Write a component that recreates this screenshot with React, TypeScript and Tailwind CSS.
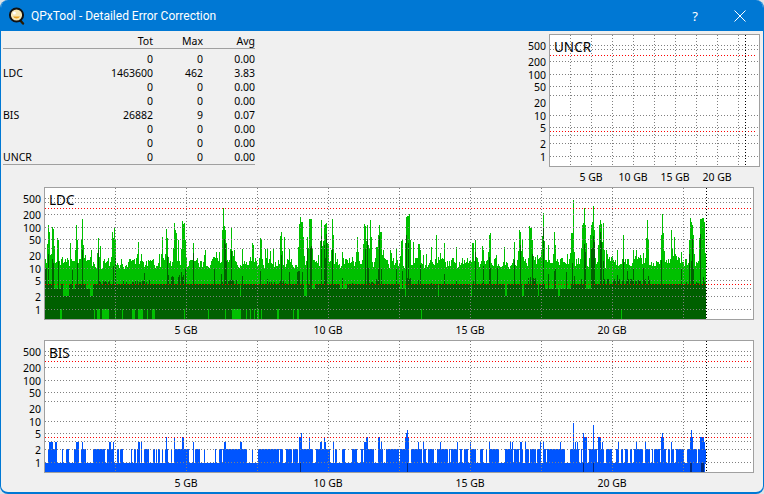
import React from "react";

const FONT = "[font-family:'Noto_Sans','Liberation_Sans',sans-serif]";
const YLABELS: [string, number][] = [["500", 12], ["200", 28], ["100", 41], ["50", 53], ["20", 69], ["10", 82], ["5", 94], ["2", 110], ["1", 123]];
const GRID = [11, 15, 27, 40, 52, 61, 81, 93, 101, 109, 122];
const RED = [21, 97];

function rng(seed: number) {
  let s = seed;
  return () => {
    s = (s * 1664525 + 1013904223) >>> 0;
    return s / 4294967296;
  };
}

function hDots(y: number, w: number) {
  let d = "";
  for (let x = 0; x < w; x += 3) d += `M${x} ${y + 0.5}h1`;
  return d;
}
function vDots(x: number, h: number) {
  let d = "";
  for (let y = 0; y < h; y += 3) d += `M${x + 0.5} ${y}v1`;
  return d;
}

/* page x, page y of the top of the tallest LDC spikes */
const LDC_PEAKS: [number, number][] = [
  [48, 225], [49, 232], [52, 227], [53, 229], [57, 238], [58, 240], [70, 243], [76, 225], [77, 240], [82, 219], [83, 245], [91, 250],
  [98, 238], [100, 246], [112, 232], [113, 238], [114, 227], [115, 240], [138, 242], [162, 237], [166, 229], [167, 238], [174, 223], [175, 230], [176, 233], [178, 240], [182, 221], [183, 224], [184, 223], [185, 240], [193, 243], [205, 250],
  [223, 208], [224, 226], [225, 230], [226, 243], [231, 227], [242, 249], [252, 243], [253, 245], [260, 238], [261, 240], [267, 249], [273, 248], [280, 236], [281, 232], [284, 237], [289, 249],
  [299, 224], [300, 217], [301, 222], [302, 222], [307, 237], [309, 219], [310, 219], [311, 219], [321, 220], [324, 225], [325, 224], [326, 223], [327, 243], [328, 244], [332, 219], [342, 252], [352, 257], [357, 237], [364, 224], [365, 226], [367, 225], [368, 245], [370, 220],
  [376, 247], [377, 247], [378, 235], [379, 225], [380, 232], [381, 232], [396, 249], [401, 241], [402, 240], [406, 217], [407, 216], [408, 216], [409, 214], [410, 240], [413, 242], [418, 244], [419, 244], [420, 250], [431, 247], [436, 235], [438, 257], [444, 243], [456, 247], [472, 243], [473, 243], [475, 240], [482, 246], [483, 250], [489, 235], [490, 233], [504, 247], [514, 242], [519, 230], [520, 232], [522, 239], [529, 226], [530, 228], [531, 228], [532, 240], [537, 255],
  [541, 250], [543, 213], [548, 245], [554, 232], [555, 245], [571, 233], [572, 233], [573, 200], [574, 252], [582, 225], [583, 223], [584, 208], [585, 225], [590, 235], [591, 225], [592, 222], [593, 206], [594, 230], [599, 225], [600, 220], [601, 224], [603, 223], [606, 250], [617, 250], [623, 235], [633, 250], [643, 253], [647, 220], [648, 240], [661, 235], [662, 214], [663, 233], [671, 230], [674, 237], [689, 240], [690, 218], [691, 222], [692, 225], [693, 235], [700, 219], [701, 219], [702, 218], [703, 218], [704, 222],
];

const STRIP: [number, number][] = [
  [60, 62], [94, 95], [97, 100], [102, 109], [115, 116], [122, 123], [132, 135], [138, 143], [147, 148], [152, 155], [184, 185], [208, 209], [225, 226], [232, 241], [246, 247], [250, 251], [254, 255], [257, 259], [261, 262], [277, 279], [293, 294], [297, 299], [421, 422], [621, 622],
];
const DIPS: [number, number, number][] = [
  [53, 57, 289], [58, 60, 289], [63, 68, 296], [72, 74, 289], [86, 89, 289], [90, 92, 296], [304, 306, 296], [312, 314, 289], [340, 346, 289], [400, 404, 289], [482, 483, 296], [522, 523, 296], [505, 506, 296], [545, 570, 289], [558, 559, 296], [585, 592, 289],
];
const BUMPS: [number, number, number][] = [
  [97, 112, 280], [120, 150, 281], [168, 184, 275], [222, 236, 280], [266, 285, 281], [296, 302, 270], [366, 378, 282], [376, 381, 266], [404, 410, 277], [528, 536, 277], [600, 650, 279], [686, 704, 282],
];

function buildLdc() {
  const r = rng(77);
  const light: string[] = [];
  const dark: string[] = [];
  const strip: string[] = [];
  const pk = new Map(LDC_PEAKS);
  const lift = new Map<number, number>();
  for (const [x, y] of LDC_PEAKS) {
    for (const o of [-1, 1]) {
      const v = y + 14 + Math.round(r() * 18);
      const k = x + o;
      if (!lift.has(k) || lift.get(k)! > v) lift.set(k, v);
    }
  }
  let base = 262;
  for (let px = 45; px <= 705; px++) {
    const x = px - 45 + 0.5;
    base = 0.35 * base + 0.65 * (255 + r() * 15);
    let top = Math.round(base);
    if (r() < 0.05) top = 249 + Math.round(r() * 7);
    const l = lift.get(px);
    if (l !== undefined && l < top) top = l;
    const p = pk.get(px);
    if (p !== undefined) top = p;
    light.push(`M${x} ${top - 188}V132`);
    let d = 284;
    for (const [a, b, y] of BUMPS) if (px >= a && px <= b && r() < 0.4) d = y + Math.round(r() * 2);
    for (const [a, b, y] of DIPS) if (px >= a && px <= b) d = y;
    if (d === 284 && r() < 0.012) d = 296;
    if (p !== undefined && r() < 0.55) d = Math.min(283, p + 10 + Math.round(r() * 30));
    else if (r() < 0.02) d = 268 + Math.round(r() * 12);
    if (px <= 46) d = 268;
    dark.push(`M${x} ${d - 188}V132`);
    if (STRIP.some(([a, b]) => px >= a && px < b)) strip.push(`M${x} 121V132`);
  }
  return { light: light.join(""), dark: dark.join(""), strip: strip.join("") };
}

const BIS_GAPS: [number, number][] = [
  [45, 47], [57, 62], [69, 74], [89, 93], [115, 116], [119, 120], [125, 131], [136, 137], [149, 153], [160, 162], [172, 175], [191, 194], [202, 204], [206, 215], [216, 219], [249, 252], [253, 255], [283, 286], [292, 293], [298, 299], [313, 315], [330, 333], [337, 340], [345, 351], [357, 361], [476, 480], [483, 486], [500, 505], [512, 514], [523, 525], [565, 570], [587, 589], [604, 606], [628, 630], [650, 652], [660, 662], [674, 676], [684, 685],
];
const BIS3 = [49, 50, 51, 52, 55, 56, 76, 77, 78, 82, 109, 110, 113, 138, 139, 141, 193, 224, 225, 240, 241, 309, 320, 321, 325, 333, 364, 365, 381, 418, 423, 440, 457, 470, 489, 510, 512, 520, 521, 525, 540, 543, 560, 575, 577, 602, 618, 636, 645, 671, 692, 704];
const BIS4: number[] = [166, 174, 182, 183, 299, 300, 301, 309, 324, 366, 367, 378, 379, 405, 406, 408, 584, 585, 586, 598, 599, 600, 661, 663, 690, 692, 700, 701, 702, 703];
const BIS_HI: [number, number][] = [[301, 433], [406, 433], [407, 430], [573, 423], [593, 425], [583, 433], [662, 433], [691, 430]];
const BIS_DARK: [number, number][] = [[300, 301], [407, 408], [583, 584], [593, 594], [690, 692], [701, 704]];

function buildBis() {
  const r = rng(2024);
  const blue: string[] = [];
  const dark: string[] = [];
  const hi = new Map(BIS_HI);
  const top3 = new Set(BIS3);
  const top4 = new Set(BIS4);
  let gap = 0;
  for (let px = 45; px <= 705; px++) {
    const x = px - 45 + 0.5;
    let top = 449;
    if (gap > 0) {
      gap--;
      top = 0;
    } else if (r() < 0.13) {
      gap = Math.floor(r() * 3);
      top = 0;
    }
    if (BIS_GAPS.some(([a, b]) => px >= a && px < b)) top = 0;
    if (top3.has(px)) top = 442;
    if (top4.has(px)) top = 437;
    const h = hi.get(px);
    if (h !== undefined) top = h;
    if (top) blue.push(`M${x} ${top - 341}V123`);
    if (BIS_DARK.some(([a, b]) => px >= a && px < b)) dark.push(`M${x} 122V132`);
  }
  return { blue: blue.join(""), dark: dark.join("") };
}

const LDC = buildLdc();
const BIS = buildBis();

function Plot({ width, step, steps, end, title, children }: { width: number; step: number; steps: number; end: number; title: string; children?: React.ReactNode }) {
  const inner = width - 2;
  const v = Array.from({ length: steps }, (_, i) => (i + 1) * step);
  return (
    <div className="relative h-[133px] border border-[#a0a0a0] bg-white" style={{ width }}>
      <svg width={inner} height={131} className="block" shapeRendering="crispEdges">
        {children}
        <path stroke="#808080" fill="none" d={GRID.map((y) => hDots(y - 1, inner)).join("") + v.map((x) => vDots(x - 1, 131)).join("")} />
        <path stroke="#ff0000" fill="none" d={RED.map((y) => hDots(y - 1, inner - 2)).join("")} />
        <path stroke="#000000" fill="none" d={vDots(end - 1, 131)} />
      </svg>
      <span className="absolute left-[4px] top-[3px] text-[13.5px] leading-[18px] text-black">{title}</span>
    </div>
  );
}

function YAxis() {
  return (
    <div className="relative mr-[3px] h-[133px] w-[30px] shrink-0">
      {YLABELS.map(([t, y]) => (
        <span key={t} className="absolute right-0 text-[10.5px] leading-[12px] text-black" style={{ top: y - 6 }}>
          {t}
        </span>
      ))}
    </div>
  );
}

function XAxis({ step, labels, width }: { step: number; labels: string[]; width: number }) {
  return (
    <div className="flex h-[20px] items-center" style={{ width, paddingLeft: step / 2 }}>
      {labels.map((l) => (
        <span key={l} className="text-center text-[10.5px] leading-[14px] text-black" style={{ width: step }}>
          {l}
        </span>
      ))}
    </div>
  );
}

function ChartBlock({ width, step, title, steps, end, axisStep, children, indent }: { width: number; step: number; title: string; steps: number; end: number; axisStep: number; children?: React.ReactNode; indent: string }) {
  return (
    <div className={`${indent} h-[153px] shrink-0`}>
      <div className="flex">
        <YAxis />
        <Plot width={width} step={step} steps={steps} end={end} title={title}>
          {children}
        </Plot>
      </div>
      <div className="ml-[33px]">
        <XAxis step={axisStep} width={width} labels={["5 GB", "10 GB", "15 GB", "20 GB"]} />
      </div>
    </div>
  );
}

const ROWS = [
  ["", "0", "0", "0.00"],
  ["LDC", "1463600", "462", "3.83"],
  ["", "0", "0", "0.00"],
  ["", "0", "0", "0.00"],
  ["BIS", "26882", "9", "0.07"],
  ["", "0", "0", "0.00"],
  ["", "0", "0", "0.00"],
  ["UNCR", "0", "0", "0.00"],
];

function Cells({ row }: { row: string[] }) {
  return (
    <div className="grid h-[14px] grid-cols-[100px_50px_50px_52px] text-[10.5px] leading-[14px] text-black">
      <span>{row[0]}</span>
      <span className="text-right">{row[1]}</span>
      <span className="text-right">{row[2]}</span>
      <span className="text-right">{row[3]}</span>
    </div>
  );
}

function Table() {
  return (
    <div className="ml-[2px] w-[252px]">
      <Cells row={["", "Tot", "Max", "Avg"]} />
      <div className="h-px bg-[#a0a0a0]" />
      <div className="mt-[3px]">
        {ROWS.map((r, i) => (
          <Cells key={i} row={r} />
        ))}
      </div>
      <div className="h-px bg-[#a0a0a0]" />
    </div>
  );
}

function AppIcon() {
  return (
    <svg width="18" height="18" viewBox="0 0 18 18" className="shrink-0">
      <path d="M11.5 12.5l3.5 4" stroke="#2a1a00" strokeWidth="2.4" strokeLinecap="round" />
      <circle cx="8.5" cy="8" r="6.6" fill="#f6e7b4" stroke="#111" strokeWidth="2" />
      <path d="M5 9.5a4 4 0 0 0 7 0z" fill="#e8a020" />
      <circle cx="6.3" cy="6" r="1.6" fill="#fff" />
    </svg>
  );
}

export default function App() {
  return (
    <div className={`h-[494px] w-[764px] overflow-hidden bg-[#dfe3e6] ${FONT}`}>
      <div className="flex h-full w-full flex-col overflow-hidden rounded-lg border-x border-b-2 border-[#0078d4] bg-[#f0f0f0]">
        <div className="flex h-[31px] shrink-0 items-center bg-[#0078d4] text-white">
          <div className="ml-[7px] mr-[5px]">
            <AppIcon />
          </div>
          <span className="text-[12px] leading-[16px] [font-family:'Roboto',sans-serif]">QPxTool - Detailed Error Correction</span>
          <span className="ml-auto mr-[36px] text-[13px] leading-[16px]">?</span>
          <svg width="12" height="12" viewBox="0 0 12 12" className="mr-[17px]">
            <path d="M.5.5l11 11M11.5.5l-11 11" stroke="#fff" strokeWidth="1" fill="none" />
          </svg>
        </div>
        <div className="flex flex-col pt-[3px]">
          <div className="flex h-[153px] justify-between">
            <Table />
            <ChartBlock width={211} step={21} steps={9} end={196} axisStep={42} title="UNCR" indent="mr-[3px]" />
          </div>
          <ChartBlock width={710} step={71} steps={9} end={662} axisStep={142} title="LDC" indent="ml-[10px]">
            <path d={LDC.light} stroke="#00c000" fill="none" />
            <path d={LDC.dark} stroke="#006000" fill="none" />
            <path d={LDC.strip} stroke="#00c000" fill="none" />
          </ChartBlock>
          <ChartBlock width={710} step={71} steps={9} end={662} axisStep={142} title="BIS" indent="ml-[10px]">
            <path d={BIS.blue} stroke="#0055ff" fill="none" />
            <rect x={0} y={122} width={660} height={10} fill="#0055ff" />
            <path d={BIS.dark} stroke="#002a80" fill="none" />
          </ChartBlock>
        </div>
      </div>
    </div>
  );
}
